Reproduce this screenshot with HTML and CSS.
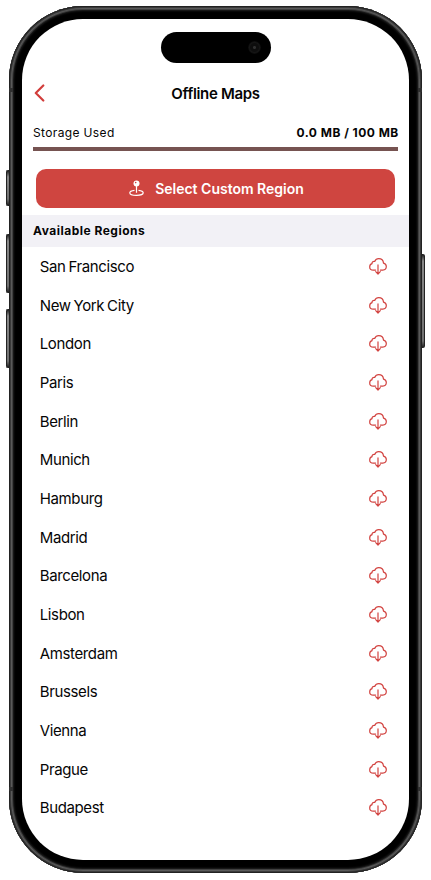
FILE: index.html
```
<!DOCTYPE html>
<html lang="en">
<head>
<meta charset="utf-8">
<title>Offline Maps</title>
<link rel="stylesheet" href="styles.css">
</head>
<body>
<svg class="defs" width="0" height="0" aria-hidden="true">
  <symbol id="cloud" viewBox="0 0 18 17">
    <path d="M6.6 12.1H4.3C2.2 12.1 .7 10.7 .7 8.9C.7 7.3 1.6 6.1 3 5.7C2.9 4 4.3 3 5.7 3.4C6.5 1.6 8 .7 9.7 .7C12.3 .7 14.3 2.5 14.5 5.1C16.2 5.5 17.3 6.8 17.3 8.6C17.3 10.7 15.8 12.1 13.8 12.1H11.4M9 6.9V15.9M6.7 13.7L9 16L11.3 13.7"/>
  </symbol>
</svg>
<div class="phone">
  <i class="side action"></i><i class="side up"></i><i class="side down"></i><i class="side power"></i>
  <i class="seam top-left"></i><i class="seam top-right"></i><i class="seam low-left"></i><i class="seam low-right"></i>
  <main class="screen">
    <div class="island"><i class="lens"></i></div>
    <header class="nav">
      <svg class="back" viewBox="0 0 11 18"><path d="M9.3 1.5L1.8 9L9.3 16.5"/></svg>
      <h1>Offline Maps</h1>
    </header>
    <section class="storage">
      <div class="usage"><span>Storage Used</span><b>0.0 MB / 100 MB</b></div>
      <div class="meter"></div>
    </section>
    <button class="select">
      <svg class="pin" viewBox="0 0 15 17"><path d="M5.5 10.3C2.8 10.6 .8 11.6 .8 12.8C.8 14.3 3.8 15.4 7.5 15.4S14.2 14.3 14.2 12.8C14.2 11.6 12.2 10.6 9.5 10.3M7.5 5V12.7"/><circle cx="7.5" cy="3.4" r="3"/><circle class="glint" cx="6.7" cy="2.6" r=".8"/></svg>
      <span>Select Custom Region</span>
    </button>
    <h2>Available Regions</h2>
    <ul>
      <li>San Francisco<svg><use href="#cloud"/></svg></li>
      <li>New York City<svg><use href="#cloud"/></svg></li>
      <li>London<svg><use href="#cloud"/></svg></li>
      <li>Paris<svg><use href="#cloud"/></svg></li>
      <li>Berlin<svg><use href="#cloud"/></svg></li>
      <li>Munich<svg><use href="#cloud"/></svg></li>
      <li>Hamburg<svg><use href="#cloud"/></svg></li>
      <li>Madrid<svg><use href="#cloud"/></svg></li>
      <li>Barcelona<svg><use href="#cloud"/></svg></li>
      <li>Lisbon<svg><use href="#cloud"/></svg></li>
      <li>Amsterdam<svg><use href="#cloud"/></svg></li>
      <li>Brussels<svg><use href="#cloud"/></svg></li>
      <li>Vienna<svg><use href="#cloud"/></svg></li>
      <li>Prague<svg><use href="#cloud"/></svg></li>
      <li>Budapest<svg><use href="#cloud"/></svg></li>
    </ul>
  </main>
</div>
</body>
</html>
```
FILE: styles.css
```
* { box-sizing: border-box; }
body { margin: 0; background: #fff; color: #050505; font-family: Inter, "Liberation Sans", sans-serif; }
.defs { position: absolute; }
.phone {
  position: relative;
  width: 413px;
  height: 867px;
  margin: 6px 0 0 9px;
  padding: 13px;
  border-radius: 74px;
  background: #000;
  box-shadow: inset 0 0 0 1px #222, inset 0 0 0 2px #3b3b3b, inset 0 0 0 3px #5a5a5a, inset 0 0 0 4px #404040, inset 0 0 2px 5px #202020;
}
.screen { display: flex; flex-direction: column; width: 387px; height: 841px; overflow: hidden; border-radius: 61px; background: #fff; }
.side { position: absolute; left: -3px; width: 3px; border: 1px solid #222; border-right: 0; border-radius: 2px 0 0 2px; background: linear-gradient(#222, #888 6px, #707070 calc(100% - 6px), #222); }
.action { top: 164px; height: 36px; }
.up { top: 228px; height: 59px; }
.down { top: 303px; height: 59px; }
.power { top: 248px; left: auto; right: -3px; height: 94px; border: 1px solid #222; border-left: 0; border-radius: 0 2px 2px 0; }
.seam { position: absolute; width: 4px; height: 4px; background: #303030; }
.top-left { left: 0; top: 82px; }
.top-right { right: 0; top: 82px; }
.low-left { left: 0; bottom: 82px; }
.low-right { right: 0; bottom: 82px; }
.island { display: flex; align-items: center; justify-content: flex-end; flex: none; width: 110px; height: 31px; margin: 13px auto 0 138.5px; padding-right: 10px; border-radius: 16px; background: #000; }
.lens { width: 13px; height: 13px; border-radius: 50%; background: radial-gradient(circle, #303030 0 1px, #0d0d0d 2px 4px, #151515 5px, #050505 7px); }
.nav { display: grid; grid-template-columns: 30px 1fr 30px; align-items: center; height: 41px; margin-top: 10px; }
.back { width: 11px; height: 18px; margin: -1px 0 0 12px; fill: none; stroke: #d23e3c; stroke-width: 2.2; stroke-linecap: round; stroke-linejoin: round; }
h1 { margin: 0; text-align: center; font-size: 15px; font-weight: 600; line-height: 20px; letter-spacing: -.33px; }
.storage { padding: 9px 11px 0; }
.usage { display: flex; justify-content: space-between; height: 19px; font-size: 12px; line-height: 20px; letter-spacing: .36px; }
.usage b { font-weight: 700; letter-spacing: .48px; margin-right: -.8px; }
.meter { height: 4px; margin-top: 5px; background: #765351; }
.select { display: flex; align-items: center; justify-content: center; flex: none; gap: 11px; height: 39px; margin: 18px 14px 0; padding: 0 0 0 2px; border: 0; border-radius: 10px; background: #cf4540; color: #fff; font: 600 14px/20px Inter, "Liberation Sans", sans-serif; }
.pin { width: 15px; height: 17px; fill: #fff; stroke: none; }
.pin path { fill: none; stroke: #fff; stroke-width: 1.2; }
.pin .glint { fill: #cf4540; }
h2 { flex: none; height: 32px; margin: 7px 0 0; padding: 0 11px; background: #f2f1f6; font-size: 12px; font-weight: 700; line-height: 32px; letter-spacing: .5px; }
ul { margin: 0; padding: 0; list-style: none; }
li { display: flex; align-items: center; justify-content: space-between; height: 38.7px; padding: 0 22.5px 0 17.7px; font-size: 15px; line-height: 19px; letter-spacing: -.36px; word-spacing: -1px; }
li svg { width: 18px; height: 17px; fill: none; stroke: #d24340; stroke-width: 1.2; stroke-linecap: round; stroke-linejoin: round; }
```
